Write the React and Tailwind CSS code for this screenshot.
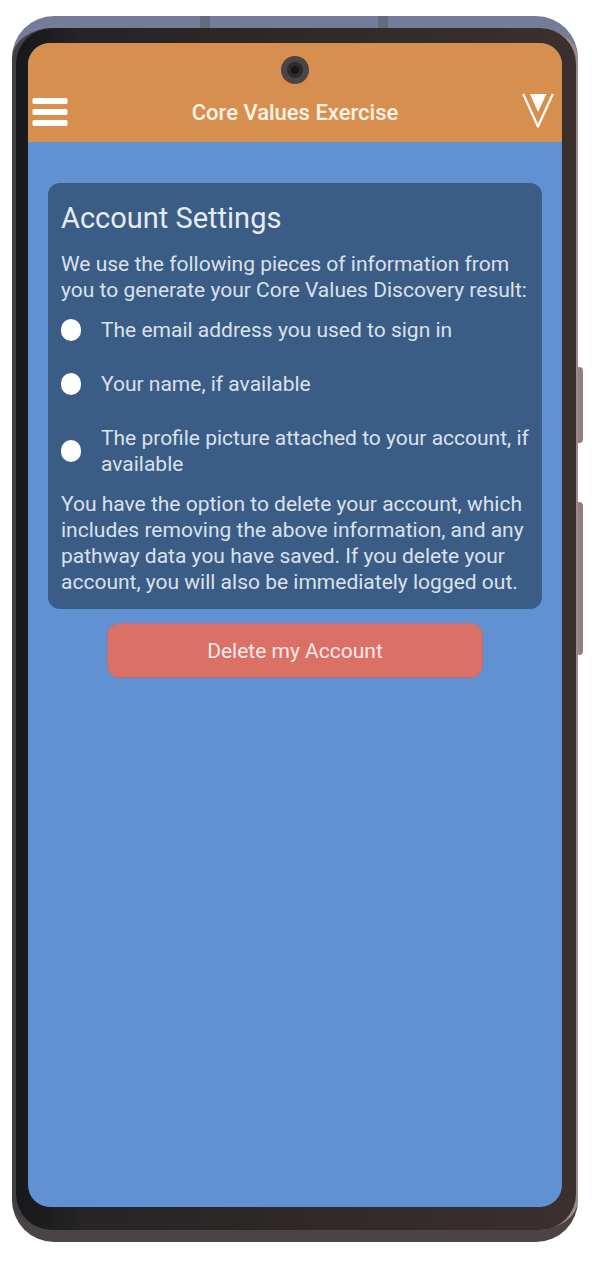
import React from "react";

const items = [
  "The email address you used to sign in",
  "Your name, if available",
  "The profile picture attached to your account, if available",
];

function MenuIcon() {
  return (
    <svg viewBox="0 0 36 30" className="h-[30px] w-9" fill="#fff" aria-hidden="true">
      <rect x="0.5" y="0" width="35" height="6" rx="1.5" />
      <rect x="0.5" y="11" width="35" height="6" rx="1.5" />
      <rect x="0.5" y="22" width="35" height="6" rx="1.5" />
    </svg>
  );
}

function Logo() {
  return (
    <svg viewBox="0 0 32 36" className="h-9 w-8" aria-hidden="true">
      <path d="M1.2 1 L16 33.5 L30.8 1" fill="none" stroke="#fff" strokeWidth="2.2" strokeLinejoin="round" />
      <path d="M8 1 H24.5 L16 19 Z" fill="#fff" />
    </svg>
  );
}

function Camera() {
  return (
    <div className="flex justify-center pt-[13px]">
      <div className="flex size-7 items-center justify-center rounded-full bg-[#4a4548]">
        <div className="flex size-4 items-center justify-center rounded-full bg-[#2f2a2b]">
          <div className="size-2 rounded-full bg-[#191516]" />
        </div>
      </div>
    </div>
  );
}

function Header() {
  return (
    <header className="bg-[#d78f50]">
      <Camera />
      <div className="flex h-[58px] items-center justify-between pr-2 pl-1">
        <button type="button" aria-label="Menu">
          <MenuIcon />
        </button>
        <h1 className="text-[22px] leading-7 font-medium text-[#fff3e6]">Core Values Exercise</h1>
        <a href="#home" aria-label="Home" className="-mt-1">
          <Logo />
        </a>
      </div>
    </header>
  );
}

function SettingsCard() {
  return (
    <section className="mx-5 mt-[41px] rounded-xl bg-[#3b5c85] px-[13px] pt-4 pb-3.5 text-[21px] leading-[26px] text-[#d9e2ec]">
      <h2 className="mb-3.5 text-[29px] leading-[38px] text-[#e6ecf3]">Account Settings</h2>
      <p>We use the following pieces of information from you to generate your Core Values Discovery result:</p>
      <ul>
        {items.map((item) => (
          <li key={item} className="flex items-center gap-5 py-3.5">
            <span className="h-[22px] w-5 shrink-0 rounded-full bg-white" />
            <span>{item}</span>
          </li>
        ))}
      </ul>
      <p>
        You have the option to delete your account, which includes removing the above information, and any pathway
        data you have saved. If you delete your account, you will also be immediately logged out.
      </p>
    </section>
  );
}

export default function App() {
  return (
    <div className="flex min-h-screen bg-white pt-4 pr-3.5 pb-5 pl-3 font-['Roboto','Liberation_Sans',sans-serif]">
      <div className="relative flex flex-1 rounded-[42px] border-y-12 border-t-[#747c9a] border-b-[#4a4445] bg-linear-to-r from-[#3f3e43] to-[#a08a84] pr-0.5 pl-1">
        <div className="absolute -top-3 left-[188px] h-3 w-2.5 bg-[#656a80]" />
        <div className="absolute -top-3 right-[190px] h-3 w-2.5 bg-[#656a80]" />
        <div className="absolute top-[339px] -right-[5px] h-[76px] w-[5px] rounded-r-sm bg-[#927f7c]" />
        <div className="absolute top-[474px] -right-[5px] h-[153px] w-[5px] rounded-r-sm bg-[#927f7c]" />
        <div className="relative flex flex-1 rounded-[36px] bg-linear-to-r from-[#17181b] via-[#262425] via-12% to-[#3b302e] pt-[15px] pr-3.5 pb-[23px] pl-3">
          <div className="flex-1 overflow-hidden rounded-[22px] bg-[#5f91d3]">
            <Header />
            <main>
              <SettingsCard />
              <div className="mx-[79px] mt-3.5">
                <button
                  type="button"
                  className="h-[55px] w-full rounded-xl border border-[#b9707c] bg-[#db7067] text-[21px] leading-[26px] text-[#fbe9e8]"
                >
                  Delete my Account
                </button>
              </div>
            </main>
          </div>
        </div>
      </div>
    </div>
  );
}
